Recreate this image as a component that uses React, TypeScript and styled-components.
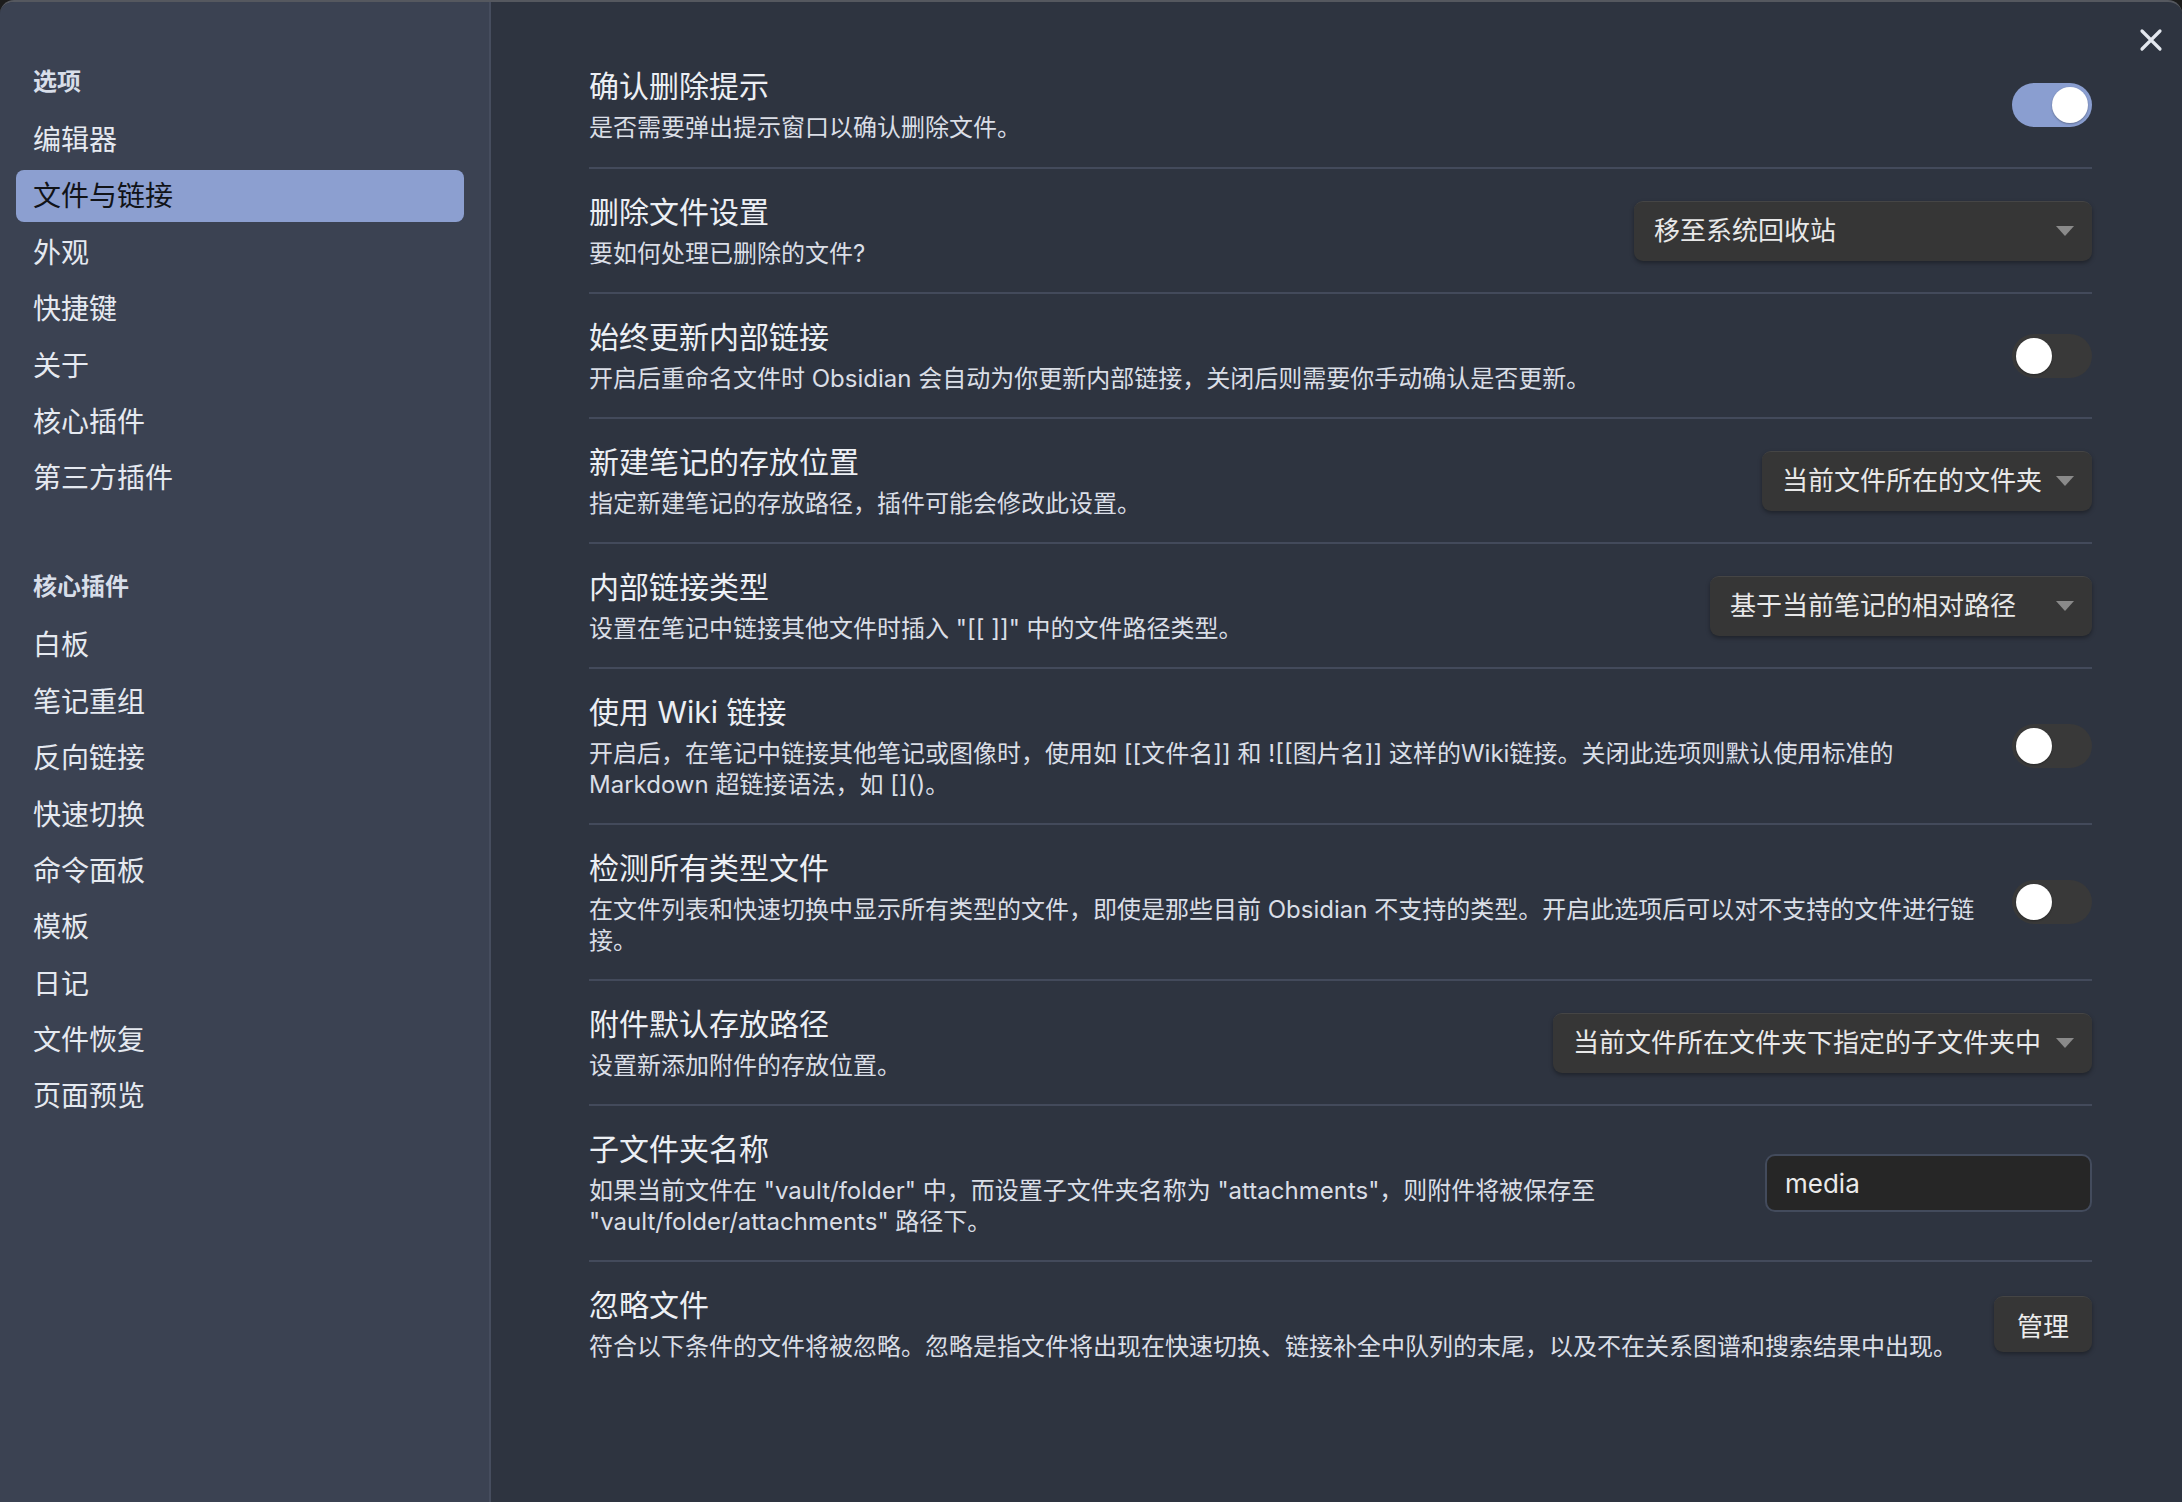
import React, { useState } from "react";
import styled, { createGlobalStyle } from "styled-components";

const GlobalStyle = createGlobalStyle`
  html, body {
    margin: 0;
    padding: 0;
    background: #1c1c1c;
  }
  body {
    font-family: "Inter", "Noto Sans CJK SC", sans-serif;
    -webkit-font-smoothing: antialiased;
  }
`;

// window frame
const Frame = styled.div`
  display: flex;
  width: 2182px;
  height: 1502px;
  box-sizing: border-box;
  border-top: 2px solid #55585f;
  border-radius: 14px 14px 0 0;
  overflow: hidden;
  position: relative;
  background: #2e3440;
`;

const Sidebar = styled.nav`
  width: 491px;
  flex-shrink: 0;
  box-sizing: border-box;
  background: #3b4252;
  border-right: 2px solid #464d5e;
  padding: 64px 25px 0 16px;
  display: flex;
  flex-direction: column;
  gap: 67px;
`;

const Group = styled.div`
  display: flex;
  flex-direction: column;
`;

const GroupTitle = styled.div`
  font-size: 24px;
  font-weight: 700;
  line-height: 32px;
  color: #d8dee9;
  padding-left: 17px;
  margin-bottom: 16px;
`;

const NavList = styled.div`
  display: flex;
  flex-direction: column;
  gap: 4.4px;
`;

const NavItem = styled.div<{ $active?: boolean }>`
  height: 52px;
  line-height: 52px;
  padding-left: 17px;
  border-radius: 8px;
  font-size: 28px;
  color: ${({ $active }) => ($active ? "#111318" : "#e5e9f0")};
  background: ${({ $active }) => ($active ? "#8c9fd0" : "transparent")};
  cursor: pointer;
`;

const Content = styled.main`
  flex: 1;
  padding: 40px 90px 0 98px;
  box-sizing: border-box;
`;

const CloseButton = styled.button`
  position: absolute;
  top: 24px;
  right: 17px;
  width: 28px;
  height: 28px;
  padding: 0;
  border: none;
  background: transparent;
  cursor: pointer;
  display: flex;
  align-items: center;
  justify-content: center;
`;

const Row = styled.div`
  display: flex;
  align-items: center;
  padding: 23px 0;
  & + & {
    border-top: 2px solid #434a5b;
  }
  &:first-child {
    padding: 24px 0;
  }
`;

const Info = styled.div`
  flex: 1;
  margin-right: 24px;
`;

const Title = styled.div`
  font-size: 30px;
  line-height: 40px;
  color: #eceff4;
  margin-bottom: 6px;
`;

const Desc = styled.div`
  font-size: 24px;
  line-height: 31px;
  color: #dadee6;
`;

const Control = styled.div`
  flex-shrink: 0;
  display: flex;
  align-items: center;
`;

const Toggle = styled.div<{ $on?: boolean }>`
  width: 80px;
  height: 44px;
  border-radius: 22px;
  box-sizing: border-box;
  padding: 4px;
  display: flex;
  justify-content: ${({ $on }) => ($on ? "flex-end" : "flex-start")};
  background: ${({ $on }) => ($on ? "#8a9ed0" : "#393939")};
  cursor: pointer;
`;

const Knob = styled.div`
  width: 36px;
  height: 36px;
  border-radius: 50%;
  background: #ffffff;
  box-shadow: 0 1px 2px rgba(0, 0, 0, 0.3);
`;

const Dropdown = styled.div<{ $width: number }>`
  width: ${({ $width }) => $width}px;
  height: 60px;
  box-sizing: border-box;
  padding: 0 18px 0 20px;
  display: flex;
  align-items: center;
  justify-content: space-between;
  background: #363636;
  border-radius: 9px;
  border-top: 1px solid #454545;
  box-shadow: 0 2px 4px rgba(0, 0, 0, 0.35);
  font-size: 26px;
  line-height: 34px;
  color: #e8e8e8;
  cursor: pointer;
`;

const Arrow = styled.span`
  width: 0;
  height: 0;
  border-left: 9px solid transparent;
  border-right: 9px solid transparent;
  border-top: 10px solid #8a8a8a;
`;

const TextInput = styled.input`
  width: 327px;
  height: 58px;
  box-sizing: border-box;
  padding: 0 18px;
  background: #262626;
  border: 2px solid #434b5c;
  border-radius: 10px;
  font-family: "Inter", "Noto Sans CJK SC", sans-serif;
  font-size: 26px;
  color: #eaeaea;
  outline: none;
`;

const Button = styled.button`
  height: 56px;
  padding: 0 23px;
  background: #363636;
  border: none;
  border-top: 1px solid #454545;
  border-radius: 9px;
  box-shadow: 0 2px 4px rgba(0, 0, 0, 0.35);
  font-family: "Inter", "Noto Sans CJK SC", sans-serif;
  font-size: 26px;
  color: #ececec;
  cursor: pointer;
`;

type ControlDef =
  | { kind: "toggle"; on: boolean }
  | { kind: "select"; value: string; width: number }
  | { kind: "input"; value: string }
  | { kind: "button"; label: string };

interface Setting {
  title: string;
  desc: string;
  control: ControlDef;
}

const settings: Setting[] = [
  { title: "确认删除提示", desc: "是否需要弹出提示窗口以确认删除文件。", control: { kind: "toggle", on: true } },
  { title: "删除文件设置", desc: "要如何处理已删除的文件?", control: { kind: "select", value: "移至系统回收站", width: 458 } },
  {
    title: "始终更新内部链接",
    desc: "开启后重命名文件时 Obsidian 会自动为你更新内部链接，关闭后则需要你手动确认是否更新。",
    control: { kind: "toggle", on: false },
  },
  {
    title: "新建笔记的存放位置",
    desc: "指定新建笔记的存放路径，插件可能会修改此设置。",
    control: { kind: "select", value: "当前文件所在的文件夹", width: 330 },
  },
  {
    title: "内部链接类型",
    desc: "设置在笔记中链接其他文件时插入 \"[[ ]]\" 中的文件路径类型。",
    control: { kind: "select", value: "基于当前笔记的相对路径", width: 382 },
  },
  {
    title: "使用 Wiki 链接",
    desc: "开启后，在笔记中链接其他笔记或图像时，使用如 [[文件名]] 和 ![[图片名]] 这样的Wiki链接。关闭此选项则默认使用标准的 Markdown 超链接语法，如 []()。",
    control: { kind: "toggle", on: false },
  },
  {
    title: "检测所有类型文件",
    desc: "在文件列表和快速切换中显示所有类型的文件，即使是那些目前 Obsidian 不支持的类型。开启此选项后可以对不支持的文件进行链接。",
    control: { kind: "toggle", on: false },
  },
  {
    title: "附件默认存放路径",
    desc: "设置新添加附件的存放位置。",
    control: { kind: "select", value: "当前文件所在文件夹下指定的子文件夹中", width: 539 },
  },
  {
    title: "子文件夹名称",
    desc: "如果当前文件在 \"vault/folder\" 中，而设置子文件夹名称为 \"attachments\"，则附件将被保存至 \"vault/folder/attachments\" 路径下。",
    control: { kind: "input", value: "media" },
  },
  {
    title: "忽略文件",
    desc: "符合以下条件的文件将被忽略。忽略是指文件将出现在快速切换、链接补全中队列的末尾，以及不在关系图谱和搜索结果中出现。",
    control: { kind: "button", label: "管理" },
  },
];

const optionItems = ["编辑器", "文件与链接", "外观", "快捷键", "关于", "核心插件", "第三方插件"];
const pluginItems = ["白板", "笔记重组", "反向链接", "快速切换", "命令面板", "模板", "日记", "文件恢复", "页面预览"];

const SettingControl = ({ control }: { control: ControlDef }) => {
  const [on, setOn] = useState(control.kind === "toggle" ? control.on : false);
  if (control.kind === "toggle") {
    return (
      <Toggle $on={on} onClick={() => setOn(!on)}>
        <Knob />
      </Toggle>
    );
  }
  if (control.kind === "select") {
    return (
      <Dropdown $width={control.width}>
        <span>{control.value}</span>
        <Arrow />
      </Dropdown>
    );
  }
  if (control.kind === "input") {
    return <TextInput defaultValue={control.value} />;
  }
  return <Button>{control.label}</Button>;
};

const App = () => {
  const [active, setActive] = useState("文件与链接");

  return (
    <>
      <GlobalStyle />
      <Frame>
        <Sidebar>
          <Group>
            <GroupTitle>选项</GroupTitle>
            <NavList>
              {optionItems.map((item) => (
                <NavItem key={item} $active={item === active} onClick={() => setActive(item)}>
                  {item}
                </NavItem>
              ))}
            </NavList>
          </Group>
          <Group>
            <GroupTitle>核心插件</GroupTitle>
            <NavList>
              {pluginItems.map((item) => (
                <NavItem key={item} $active={item === active} onClick={() => setActive(item)}>
                  {item}
                </NavItem>
              ))}
            </NavList>
          </Group>
        </Sidebar>

        <Content>
          {settings.map((s) => (
            <Row key={s.title}>
              <Info>
                <Title>{s.title}</Title>
                <Desc>{s.desc}</Desc>
              </Info>
              <Control>
                <SettingControl control={s.control} />
              </Control>
            </Row>
          ))}
        </Content>

        <CloseButton aria-label="close">
          <svg width="24" height="24" viewBox="0 0 24 24">
            <path d="M3 3 L21 21 M21 3 L3 21" stroke="#e3e7ee" strokeWidth="3.2" strokeLinecap="round" />
          </svg>
        </CloseButton>
      </Frame>
    </>
  );
};

export default App;
